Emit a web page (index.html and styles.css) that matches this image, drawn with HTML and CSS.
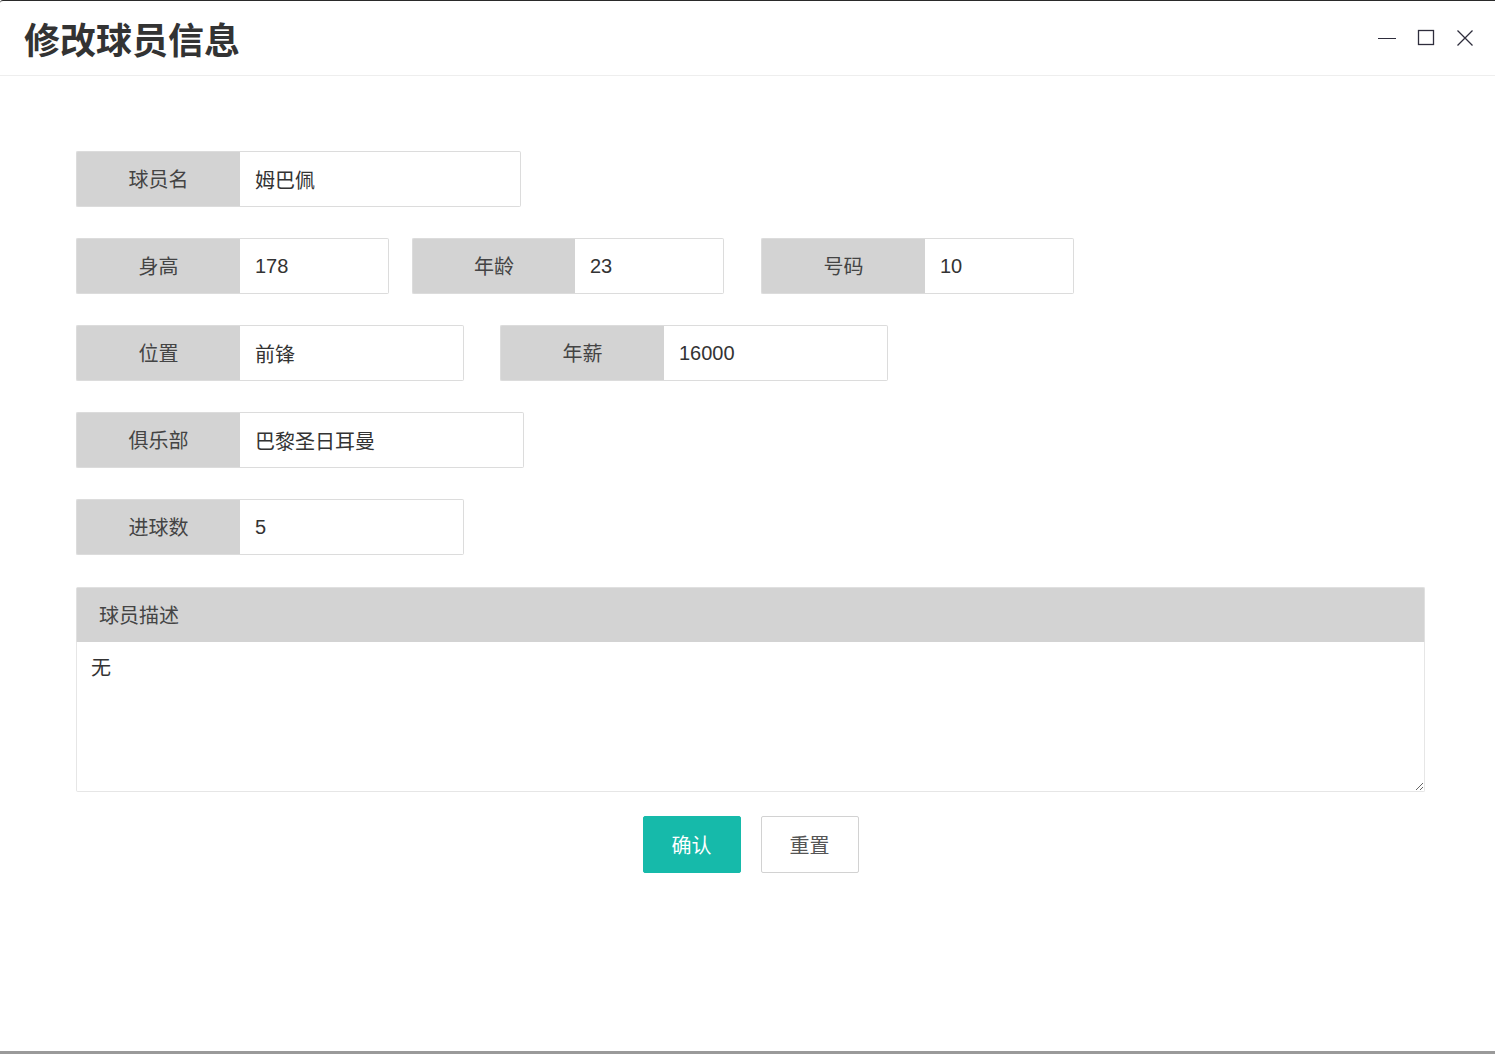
FILE: index.html
```html
<!DOCTYPE html>
<html lang="zh-CN">
<head>
<meta charset="utf-8">
<title>修改球员信息</title>
<link rel="stylesheet" href="styles.css">
</head>
<body>
<div class="window">
  <div class="titlebar">
    <h1 class="title">修改球员信息</h1>
    <div class="controls">
      <span class="ctl ctl-min"><svg width="20" height="20" viewBox="0 0 20 20"><line x1="1" y1="10.5" x2="19" y2="10.5" stroke="#2e2d3c" stroke-width="1.2"/></svg></span>
      <span class="ctl ctl-max"><svg width="20" height="20" viewBox="0 0 20 20"><rect x="2.5" y="2.5" width="15" height="14" fill="none" stroke="#2e2d3c" stroke-width="1.3"/></svg></span>
      <span class="ctl ctl-close"><svg width="20" height="20" viewBox="0 0 20 20"><path d="M2.5 2.5 L17.5 17.5 M17.5 2.5 L2.5 17.5" stroke="#2e2d3c" stroke-width="1.3" fill="none"/></svg></span>
    </div>
  </div>

  <form class="form">
    <div class="row">
      <div class="field"><label class="lbl">球员名</label><input class="inp w281" value="姆巴佩"></div>
    </div>
    <div class="row">
      <div class="field"><label class="lbl">身高</label><input class="inp w149" value="178"></div>
      <div class="field ml24"><label class="lbl lbl-narrow">年龄</label><input class="inp w149" value="23"></div>
      <div class="field ml38"><label class="lbl">号码</label><input class="inp w149" value="10"></div>
    </div>
    <div class="row">
      <div class="field"><label class="lbl">位置</label><input class="inp w224" value="前锋"></div>
      <div class="field ml37"><label class="lbl">年薪</label><input class="inp w224" value="16000"></div>
    </div>
    <div class="row">
      <div class="field"><label class="lbl">俱乐部</label><input class="inp w284" value="巴黎圣日耳曼"></div>
    </div>
    <div class="row">
      <div class="field"><label class="lbl">进球数</label><input class="inp w224" value="5"></div>
    </div>

    <div class="text-block">
      <div class="text-lbl">球员描述</div>
      <textarea class="text-area">无</textarea>
    </div>

    <div class="buttons">
      <button type="button" class="btn btn-primary">确认</button>
      <button type="button" class="btn btn-plain">重置</button>
    </div>
  </form>
  <div class="spacer"></div>
  <div class="bottom-edge"></div>
</div>
</body>
</html>
```

FILE: styles.css
```css
* { box-sizing: border-box; }

html, body {
  margin: 0;
  padding: 0;
  background: #fff;
}

body {
  font-family: "Liberation Sans", "Noto Sans CJK SC", sans-serif;
  color: #333;
}

.window {
  height: 1054px;
  display: flex;
  flex-direction: column;
  border-top: 1px solid #2a2a2a;
  border-top-left-radius: 3px;
  overflow: hidden;
}

.titlebar {
  height: 75px;
  flex: none;
  display: flex;
  align-items: center;
  justify-content: space-between;
  border-bottom: 1px solid #eee;
  padding-left: 24px;
  padding-right: 20px;
}

.title {
  margin: 0;
  font-size: 36px;
  font-weight: bold;
  color: #333;
  line-height: 1;
  font-family: "Noto Sans CJK SC", sans-serif;
}

.controls {
  display: flex;
  align-items: center;
  gap: 19px;
}

.ctl {
  display: block;
  width: 20px;
  height: 20px;
}

.ctl svg { display: block; }

.form {
  padding: 75px 70px 0 76px;
  display: flex;
  flex-direction: column;
}

.row {
  display: flex;
  margin-bottom: 31px;
}

.field {
  display: flex;
  height: 56px;
}

.ml24 { margin-left: 23px; }
.ml38 { margin-left: 37px; }
.ml37 { margin-left: 36px; }

.lbl {
  width: 164px;
  height: 56px;
  background: #d3d3d3;
  border: 1px solid #dcdcdc;
  border-right: none;
  border-radius: 2px 0 0 2px;
  display: flex;
  align-items: center;
  justify-content: center;
  padding-bottom: 1px;
  font-size: 20px;
  color: #444;
  font-family: "Noto Sans CJK SC", sans-serif;
}

.lbl-narrow { width: 163px; }

.inp {
  height: 56px;
  border: 1px solid #dcdcdc;
  border-left: none;
  border-radius: 0 2px 2px 0;
  background: #fff;
  padding: 0 15px;
  font-size: 20px;
  font-family: "Liberation Sans", "Noto Sans CJK SC", sans-serif;
  color: #333;
  outline: none;
}

.w281 { width: 281px; }
.w149 { width: 149px; }
.w224 { width: 224px; }
.w284 { width: 284px; }

.text-block {
  width: 1349px;
  display: flex;
  flex-direction: column;
  margin-top: 1px;
}

.text-lbl {
  height: 55px;
  background: #d3d3d3;
  border: 1px solid #e0e0e0;
  border-bottom: none;
  border-radius: 2px 2px 0 0;
  display: flex;
  align-items: center;
  padding-left: 22px;
  padding-bottom: 2px;
  font-size: 20px;
  color: #444;
  font-family: "Noto Sans CJK SC", sans-serif;
}

.text-area {
  height: 150px;
  width: 100%;
  border: 1px solid #e6e6e6;
  border-top: none;
  border-radius: 0 0 2px 2px;
  padding: 12px 14px;
  font-size: 20px;
  line-height: 26px;
  color: #333;
  font-family: "Noto Sans CJK SC", sans-serif;
  resize: vertical;
  outline: none;
  display: block;
}

.buttons {
  width: 1349px;
  display: flex;
  justify-content: center;
  gap: 20px;
  margin-top: 24px;
}

.btn {
  width: 98px;
  height: 57px;
  border-radius: 2px;
  font-size: 20px;
  font-family: "Noto Sans CJK SC", sans-serif;
  cursor: pointer;
  padding: 0;
}

.btn-primary {
  background: #16baaa;
  border: 1px solid #16baaa;
  color: #fff;
}

.btn-plain {
  background: #fff;
  border: 1px solid #d2d2d2;
  color: #555;
}

.spacer { flex: 1; }

.bottom-edge {
  height: 3px;
  background: #9a9a9a;
  flex: none;
}
```
